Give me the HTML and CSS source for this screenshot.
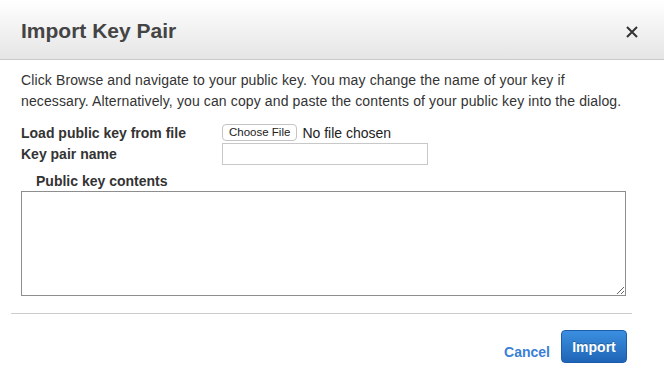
FILE: index.html
```html
<!DOCTYPE html>
<html lang="en">
<head>
    <meta charset="UTF-8">
    <meta name="viewport" content="width=device-width, initial-scale=1.0">
    <title>Import Key Pair</title>
    <link rel="stylesheet" href="styles.css">
</head>
<body>
    <div class="dialog">
        <div class="dialog-header">
            <h1>Import Key Pair</h1>
            <button class="close" aria-label="Close">
                <svg width="12" height="12" viewBox="0 0 12 12">
                    <path d="M1 1 L11 11 M11 1 L1 11" stroke="#333" stroke-width="2" fill="none"/>
                </svg>
            </button>
        </div>

        <div class="dialog-body">
            <p class="intro">Click Browse and navigate to your public key. You may change the name of your key if<br>
            necessary. Alternatively, you can copy and paste the contents of your public key into the dialog.</p>

            <div class="form-grid">
                <label for="keyFile">Load public key from file</label>
                <div class="file-field">
                    <label class="file-btn" for="keyFile">Choose File</label>
                    <input type="file" id="keyFile" class="file-input">
                    <span class="file-name">No file chosen</span>
                </div>

                <label for="keyName">Key pair name</label>
                <div>
                    <input type="text" id="keyName" class="text-input">
                </div>
            </div>

            <label class="contents-label" for="keyContents">Public key contents</label>
            <textarea id="keyContents"></textarea>
        </div>

        <div class="dialog-footer">
            <a href="#" class="cancel">Cancel</a>
            <button class="primary">Import</button>
        </div>
    </div>
</body>
</html>
```

FILE: styles.css
```css
* {
    box-sizing: border-box;
    margin: 0;
    padding: 0;
    font-family: 'Liberation Sans', Arial, Helvetica, sans-serif;
}

body {
    background-color: white;
    color: #333;
}

.dialog {
    width: 664px;
}

.dialog-header {
    height: 60px;
    display: flex;
    align-items: center;
    justify-content: space-between;
    padding: 0 26px 0 21px;
    background: linear-gradient(to bottom, #ffffff 0%, #e5e5e5 100%);
    border-bottom: 1px solid #c9c9c9;
}

.dialog-header h1 {
    font-size: 21px;
    font-weight: bold;
    color: #444;
    margin-top: 2px;
}

.close {
    background: none;
    border: none;
    width: 12px;
    height: 12px;
    cursor: pointer;
    display: flex;
    margin-top: 5px;
}

.dialog-body {
    padding: 10px 38px 0 21px;
}

.intro {
    font-size: 14px;
    line-height: 21px;
    letter-spacing: 0.12px;
    color: #333;
}

.form-grid {
    display: grid;
    grid-template-columns: 200px 1fr;
    row-gap: 2px;
    margin-top: 12px;
    align-items: center;
}

.form-grid > label {
    font-size: 14px;
    font-weight: bold;
    color: #333;
}

.file-field {
    display: flex;
    align-items: center;
    height: 17px;
    font-size: 14px;
}

.file-input {
    display: none;
}

.file-btn {
    display: inline-block;
    height: 17px;
    line-height: 15px;
    padding: 0 6px;
    font-size: 11.5px;
    color: #222;
    background: #fff;
    border: 1px solid #c4c4c4;
    border-radius: 4px;
    cursor: pointer;
    margin-left: 1px;
}

.file-name {
    margin-left: 5px;
    color: #222;
}

.text-input {
    display: block;
    width: 206px;
    height: 22px;
    margin-left: 1px;
    border: 1px solid #c8c8c8;
    background: #fff;
    font-size: 13px;
    padding: 0 4px;
}

.contents-label {
    display: block;
    font-size: 14px;
    font-weight: bold;
    line-height: 20px;
    margin-top: 6px;
    padding-left: 15px;
    color: #333;
}

textarea {
    display: block;
    width: 605px;
    height: 105px;
    border: 1px solid #8e8e8e;
    font-size: 13px;
}

.dialog-footer {
    margin: 17px 32px 0 11px;
    padding: 16px 5px 0 0;
    border-top: 1px solid #cccccc;
    display: flex;
    justify-content: flex-end;
    align-items: flex-end;
    gap: 11px;
}

.cancel {
    font-size: 14px;
    font-weight: bold;
    color: #3a7fd5;
    text-decoration: none;
    margin-bottom: 3px;
}

.primary {
    width: 66px;
    height: 33px;
    font-size: 14px;
    font-weight: bold;
    color: white;
    text-shadow: 0 -1px 0 rgba(0,0,0,0.25);
    background: linear-gradient(to bottom, #3b8fe0 0%, #1f65b7 100%);
    border: 1px solid #1c5ca8;
    border-radius: 4px;
    cursor: pointer;
}
```
